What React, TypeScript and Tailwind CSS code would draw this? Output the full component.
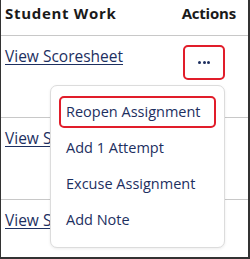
import React from "react";

const items = ["Reopen Assignment", "Add 1 Attempt", "Excuse Assignment", "Add Note"];

export default function App() {
  return (
    <div
      className="relative w-[250px] h-[259px] bg-white border-l border-r-2 border-b-2 border-[#333333] overflow-hidden"
      style={{ fontFamily: "'Open Sans', sans-serif" }}
    >
      <div className="h-[36px] border-b border-[#c8c8c8] flex items-start justify-between pl-[4px] pr-[12px] pt-[2px]">
        <span className="font-bold text-[15px] tracking-[0.7px] text-[#1a1a1a]">Student Work</span>
        <span className="font-bold text-[15px] tracking-[-0.2px] text-[#1a1a1a]">Actions</span>
      </div>
      {[0, 1, 2].map((i) => (
        <div
          key={i}
          className={`flex items-start ${i < 2 ? "h-[82px] border-b border-[#c8c8c8]" : "h-[57px]"}`}
        >
          <a className="pl-[4px] pt-[8px] text-[15.5px] leading-[24px] text-[#1d2f5f] underline underline-offset-2">
            View Scoresheet
          </a>
          {i === 0 && (
            <button className="ml-auto mr-[23px] mt-[9px] w-[42px] h-[35px] border-2 border-[#e11d2a] rounded-[5px] flex items-center justify-center gap-[1.5px]">
              <span className="w-[3px] h-[3px] rounded-full bg-[#1d2f5f]" />
              <span className="w-[3px] h-[3px] rounded-full bg-[#1d2f5f]" />
              <span className="w-[3px] h-[3px] rounded-full bg-[#1d2f5f]" />
            </button>
          )}
        </div>
      ))}
      <div className="absolute left-[49px] top-[85px] w-[175px] h-[163px] bg-white border border-[#dcdcdc] rounded-[7px] shadow-[0_1px_3px_rgba(0,0,0,0.08)] px-[8px] pt-[10px] flex flex-col gap-[4px]">
        {items.map((t, i) => (
          <div
            key={t}
            className={`h-[32px] flex items-center px-[5px] border-2 rounded-[5px] text-[14.5px] text-[#1d2f5f] ${
              i === 0 ? "border-[#e11d2a]" : "border-transparent"
            }`}
          >
            {t}
          </div>
        ))}
      </div>
    </div>
  );
}
